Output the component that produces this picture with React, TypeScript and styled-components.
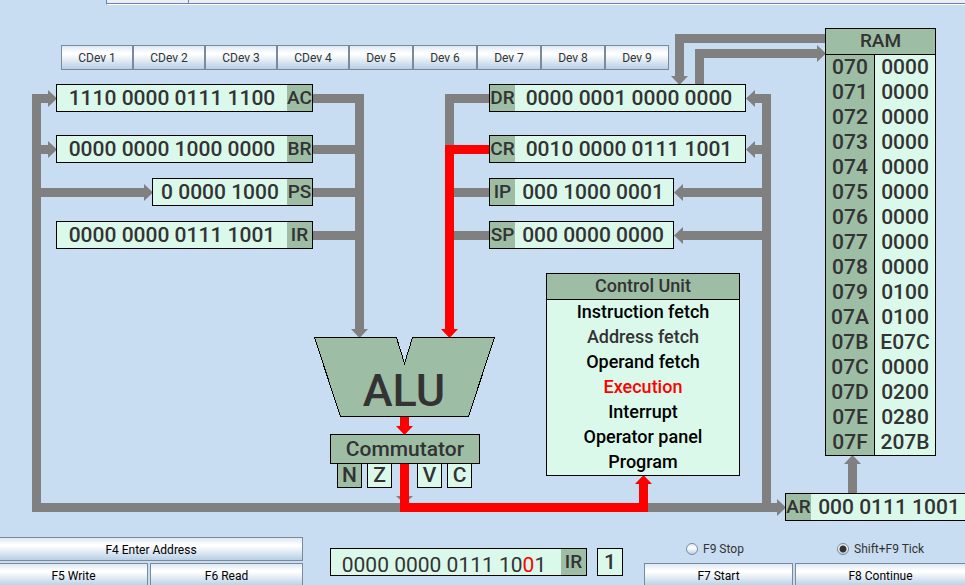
import React from "react";
import styled, { createGlobalStyle } from "styled-components";

const color = {
  page: "#c8ddf2",
  title: "#9dbda5",
  value: "#dbf9eb",
  text: "#333333",
  bus: "#808080",
  active: "#ff0000",
  edge: "#7a8a99",
};

const GlobalStyle = createGlobalStyle`
  * { box-sizing: border-box; }
  body {
    margin: 0;
    overflow: hidden;
    background: ${color.page};
    color: ${color.text};
    font-family: Roboto, "Liberation Sans", sans-serif;
  }
`;

const Page = styled.main`
  display: flex;
  flex-direction: column;
  min-height: 100vh;
`;

const TabStrip = styled.div`
  display: flex;
  height: 5px;
  margin-left: 106px;
  background: #eeeeee;
  border-left: 1px solid #6382bf;
  border-bottom: 1px solid #ffffff;
`;

const TabEdge = styled.div<{ $grow?: boolean }>`
  flex: ${(p) => (p.$grow ? "1" : "0 0 82px")};
  border-right: ${(p) => (p.$grow ? "none" : `1px solid ${color.edge}`)};
  border-bottom: 1px solid #6382bf;
`;

const Canvas = styled.section`
  position: relative;
  height: 532px;
  padding: 40px 0 0 61px;
`;

const Wires = styled.svg`
  position: absolute;
  inset: 0;
  pointer-events: none;
`;

const DeviceBar = styled.nav`
  display: flex;
`;

const Button = styled.button<{ $width?: number; $bleed?: "left" | "right" }>`
  width: ${(p) => (p.$width ? `${p.$width}px` : "auto")};
  height: 24px;
  padding: 2px 0 0;
  border: 1px solid ${color.edge};
  ${(p) => p.$bleed && `border-${p.$bleed}: none;`}
  background: linear-gradient(#dde8f3 0%, #ffffff 30%, #ffffff 36%, #b8cfe5 100%);
  color: #000000;
  font: 400 12px/16px Roboto, "Liberation Sans", sans-serif;
`;

const DeviceButton = styled(Button)`
  height: 25px;
  padding: 0;
  color: ${color.text};
`;

const Node = styled.div<{ $x: number; $y: number }>`
  position: absolute;
  left: ${(p) => p.$x}px;
  top: ${(p) => p.$y}px;
`;

const RegisterBox = styled.div<{ $width: number }>`
  display: flex;
  width: ${(p) => p.$width}px;
  height: 28px;
  border: 1px solid #000000;
  background: ${color.value};
  line-height: 26px;
`;

const RegisterName = styled.span`
  flex: 0 0 25px;
  background: ${color.title};
  font-size: 19px;
  font-weight: 500;
  text-align: center;
`;

const RegisterValue = styled.span<{ $weight: number; $trail?: boolean }>`
  flex: 1;
  padding-right: ${(p) => (p.$trail ? "2px" : "0")};
  font-size: 21px;
  font-weight: ${(p) => p.$weight};
  text-align: center;
  white-space: nowrap;
`;

const InputBits = styled(RegisterValue)`
  padding: 3px 4px 0 0;
`;

const ActiveBit = styled.span`
  color: ${color.active};
`;

const RamTable = styled.table`
  width: 111px;
  border: 1px solid #000000;
  border-spacing: 0;
  background: ${color.value};
  font-size: 21px;
  font-weight: 500;
  line-height: 25px;
`;

const RamTitle = styled.th`
  height: 26px;
  padding: 0 0 2px;
  border-bottom: 1px solid #000000;
  background: ${color.title};
  font-size: 19px;
  font-weight: 500;
  line-height: 23px;
`;

const RamAddress = styled.th`
  width: 49px;
  height: 25px;
  padding: 0;
  border-right: 1px solid #000000;
  background: ${color.title};
  font-weight: 500;
`;

const RamCell = styled.td`
  padding: 0;
  text-align: center;
`;

const ControlUnit = styled.div`
  width: 194px;
  border: 1px solid #000000;
  background: ${color.value};
  font-size: 18px;
  font-weight: 500;
  line-height: 23px;
  text-align: center;
`;

const ControlTitle = styled.h2`
  margin: 0;
  padding-bottom: 2px;
  border-bottom: 1px solid #000000;
  background: ${color.title};
  font: inherit;
`;

const CycleList = styled.ul`
  margin: 0;
  padding: 0;
  list-style: none;
`;

const Cycle = styled.li<{ $color: string }>`
  padding-bottom: 2px;
  color: ${(p) => p.$color};
`;

const Commutator = styled.div`
  width: 150px;
  height: 30px;
  border: 1px solid #000000;
  background: ${color.title};
  font-size: 21px;
  font-weight: 500;
  line-height: 28px;
  text-align: center;
`;

const Flag = styled.div<{ $on?: boolean }>`
  width: 25px;
  height: 25px;
  border: 1px solid #000000;
  background: ${(p) => (p.$on ? color.title : color.value)};
  font-size: 21px;
  font-weight: 500;
  line-height: 23px;
  text-align: center;
`;

const AluLabel = styled.div`
  width: 180px;
  font-size: 45px;
  font-weight: 500;
  line-height: 52px;
  text-align: center;
`;

const ControlPanel = styled.footer`
  display: flex;
  align-items: flex-start;
`;

const AddressButtons = styled.div`
  display: grid;
  flex: 0 0 303px;
  grid-template-columns: 148px 1fr;
  gap: 2px;
`;

const WideButton = styled(Button)`
  grid-column: 1 / -1;
`;

const InputRegister = styled.div`
  display: flex;
  gap: 10px;
  margin: 11px 21px 0 27px;
`;

const RunControls = styled.div`
  display: grid;
  flex: 1;
  grid-template-columns: 149px 1fr;
  gap: 2px;
`;

const RadioLabel = styled.label`
  display: flex;
  height: 24px;
  padding-left: 42px;
  align-items: center;
  gap: 5px;
  font-size: 12px;
`;

const Radio = styled.input`
  width: 12px;
  height: 12px;
  margin: 0;
  appearance: none;
  border: 1px solid ${color.edge};
  border-radius: 50%;
  background: linear-gradient(#dde8f3, #ffffff 40%, #b8cfe5);
  &:checked {
    background: radial-gradient(circle, ${color.text} 3px, transparent 4px),
      linear-gradient(#dde8f3, #ffffff 40%, #b8cfe5);
  }
`;

type RegisterProps = {
  name: string;
  value: string;
  width: number;
  nameFirst?: boolean;
};

function Register({ name, value, width, nameFirst }: RegisterProps) {
  const label = <RegisterName>{name}</RegisterName>;
  return (
    <RegisterBox $width={width}>
      {nameFirst && label}
      <RegisterValue $weight={500} $trail={nameFirst}>{value}</RegisterValue>
      {!nameFirst && label}
    </RegisterBox>
  );
}

const devices = [
  ["CDev 1", 72], ["CDev 2", 72], ["CDev 3", 72], ["CDev 4", 72],
  ["Dev 5", 64], ["Dev 6", 64], ["Dev 7", 64], ["Dev 8", 64], ["Dev 9", 64],
] as const;

const registers = [
  { name: "AC", value: "1110 0000 0111 1100", x: 56, y: 79, width: 257 },
  { name: "BR", value: "0000 0000 1000 0000", x: 56, y: 130, width: 257 },
  { name: "PS", value: "0 0000 1000", x: 152, y: 173, width: 161 },
  { name: "IR", value: "0000 0000 0111 1001", x: 56, y: 216, width: 257 },
  { name: "DR", value: "0000 0001 0000 0000", x: 489, y: 79, width: 257, nameFirst: true },
  { name: "CR", value: "0010 0000 0111 1001", x: 489, y: 130, width: 257, nameFirst: true },
  { name: "IP", value: "000 1000 0001", x: 489, y: 173, width: 185, nameFirst: true },
  { name: "SP", value: "000 0000 0000", x: 489, y: 216, width: 185, nameFirst: true },
  { name: "AR", value: "000 0111 1001", x: 785, y: 488, width: 185, nameFirst: true },
];

const memory = [
  ["070", "0000"], ["071", "0000"], ["072", "0000"], ["073", "0000"],
  ["074", "0000"], ["075", "0000"], ["076", "0000"], ["077", "0000"],
  ["078", "0000"], ["079", "0100"], ["07A", "0100"], ["07B", "E07C"],
  ["07C", "0000"], ["07D", "0200"], ["07E", "0280"], ["07F", "207B"],
];

const cycles = [
  ["Instruction fetch", "#000000"],
  ["Address fetch", color.text],
  ["Operand fetch", "#000000"],
  ["Execution", color.active],
  ["Interrupt", "#000000"],
  ["Operator panel", "#000000"],
  ["Program", "#000000"],
];

const flags = [
  { name: "N", x: 337, on: true },
  { name: "Z", x: 367 },
  { name: "V", x: 417 },
  { name: "C", x: 447 },
];

function Buses() {
  return (
    <Wires width="100%" height="532" aria-hidden="true">
      <g transform="translate(0 -5)">
        <g fill="none" stroke={color.bus} strokeWidth="9">
          <path d="M48 98.5H36.5V507.5H777M36.5 149.5H48M36.5 192.5H144" />
          <path d="M313 98.5H359.5V329M313 149.5H359.5M313 192.5H359.5M313 235.5H359.5" />
          <path d="M489 98.5H449.5V149.5M489 192.5H449.5M489 235.5H449.5" />
          <path d="M755 98.5H766.5V507.5M755 149.5H766.5M683 192.5H766.5M683 235.5H766.5" />
          <path d="M825 38.5H679.5V76M699.5 84V53.5H817" />
          <path d="M852.5 493V464" />
        </g>
        <g fill={color.bus}>
          <path d="M48 90L57 98.5L48 107Z M48 141L57 149.5L48 158Z M144 184L153 192.5L144 201Z" />
          <path d="M351 329H368L359.5 338Z M396 496H413L404.5 504Z" />
          <path d="M755 90L746 98.5L755 107Z M755 141L746 149.5L755 158Z" />
          <path d="M683 184L674 192.5L683 201Z M683 227L674 235.5L683 244Z" />
          <path d="M671 76H688L679.5 85Z M817 45L826 53.5L817 62Z" />
          <path d="M777 499L786 507.5L777 516Z M844 464H861L852.5 455Z" />
        </g>
        <g fill="none" stroke={color.active} strokeWidth="9">
          <path d="M489 149.5H449.5V329M404.5 417V426M404.5 464V507.5H643.5V484" />
        </g>
        <path
          fill={color.active}
          d="M441 329H458L449.5 338Z M396 426H413L404.5 435Z M635 484H652L643.5 475Z"
        />
        <path
          d="M314.5 337.5H396.5L404.5 363.5L412.5 337.5H494.5L468.5 416.5H340.5Z"
          fill={color.title}
          stroke="#000000"
          shapeRendering="crispEdges"
        />
      </g>
    </Wires>
  );
}

export default function App() {
  return (
    <Page>
      <GlobalStyle />
      <TabStrip>
        <TabEdge />
        <TabEdge $grow />
      </TabStrip>
      <Canvas>
        <DeviceBar>
          {devices.map(([name, width]) => (
            <DeviceButton key={name} type="button" $width={width}>{name}</DeviceButton>
          ))}
        </DeviceBar>
        <Buses />
        {registers.map(({ x, y, ...register }) => (
          <Node key={register.name} $x={x} $y={y}>
            <Register {...register} />
          </Node>
        ))}
        <Node $x={825} $y={23}>
          <RamTable>
            <thead>
              <tr><RamTitle colSpan={2}>RAM</RamTitle></tr>
            </thead>
            <tbody>
              {memory.map(([address, value]) => (
                <tr key={address}>
                  <RamAddress scope="row">{address}</RamAddress>
                  <RamCell>{value}</RamCell>
                </tr>
              ))}
            </tbody>
          </RamTable>
        </Node>
        <Node $x={546} $y={268}>
          <ControlUnit>
            <ControlTitle>Control Unit</ControlTitle>
            <CycleList>
              {cycles.map(([name, tone]) => (
                <Cycle key={name} $color={tone}>{name}</Cycle>
              ))}
            </CycleList>
          </ControlUnit>
        </Node>
        <Node $x={314} $y={360}><AluLabel>ALU</AluLabel></Node>
        {flags.map((flag) => (
          <Node key={flag.name} $x={flag.x} $y={458}>
            <Flag $on={flag.on}>{flag.name}</Flag>
          </Node>
        ))}
        <Node $x={330} $y={429}><Commutator>Commutator</Commutator></Node>
      </Canvas>
      <ControlPanel>
        <AddressButtons>
          <WideButton type="button" $bleed="left">F4 Enter Address</WideButton>
          <Button type="button" $bleed="left">F5 Write</Button>
          <Button type="button">F6 Read</Button>
        </AddressButtons>
        <InputRegister>
          <RegisterBox $width={257}>
            <InputBits $weight={400}>
              0000 0000 0111 10<ActiveBit>0</ActiveBit>1
            </InputBits>
            <RegisterName>IR</RegisterName>
          </RegisterBox>
          <RegisterBox $width={26}>
            <RegisterValue $weight={500}>1</RegisterValue>
          </RegisterBox>
        </InputRegister>
        <RunControls>
          <RadioLabel>
            <Radio type="radio" name="clock" />
            F9 Stop
          </RadioLabel>
          <RadioLabel>
            <Radio type="radio" name="clock" defaultChecked />
            Shift+F9 Tick
          </RadioLabel>
          <Button type="button">F7 Start</Button>
          <Button type="button" $bleed="right">F8 Continue</Button>
        </RunControls>
      </ControlPanel>
    </Page>
  );
}
